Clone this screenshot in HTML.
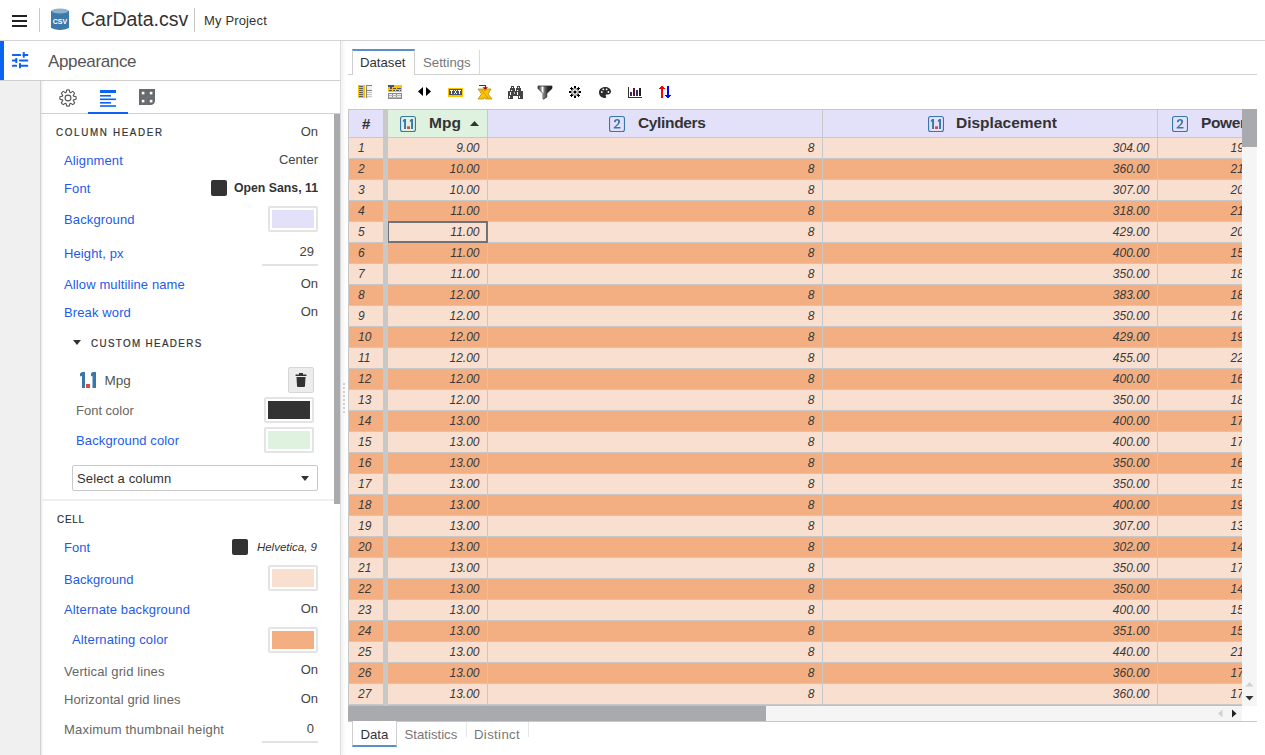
<!DOCTYPE html>
<html><head><meta charset="utf-8"><title>CarData.csv</title><style>
*{box-sizing:border-box}
html,body{margin:0;padding:0}
body{width:1265px;height:755px;overflow:hidden;position:relative;background:#fff;font-family:"Liberation Sans", sans-serif;color:#333}
.a{position:absolute}
.t{position:absolute;white-space:nowrap;line-height:1}
.lbl{color:#1f5be8;font-size:13px}
.gl{color:#666;font-size:13px}
.val{color:#444;font-size:13px}
.sw{position:absolute;border:2px solid #e4e4e4;background:#fff;border-radius:2px}
.sw i{position:absolute;left:2px;top:2px;right:2px;bottom:2px}
.row{position:absolute;left:349px;width:893px;height:20px}
.c{position:absolute;top:0;height:20px;font-size:12px;font-style:italic;line-height:20px;white-space:nowrap;color:#3a3a3a}
</style></head>
<body>
<div class="a" style="left:0;top:40px;width:1265px;height:1px;background:#d4d4d4"></div>
<div class="a" style="left:12px;top:15px;width:15px;height:2.4px;background:#222"></div>
<div class="a" style="left:12px;top:20px;width:15px;height:2.4px;background:#222"></div>
<div class="a" style="left:12px;top:25px;width:15px;height:2.4px;background:#222"></div>
<div class="a" style="left:39px;top:8px;width:1px;height:24px;background:#c8c8c8"></div>
<svg class="a" style="left:51px;top:8px" width="18" height="23" viewBox="0 0 18 23">
<path d="M0 3 Q9 -1 18 3 L18 20 Q9 24 0 20 Z" fill="#3d79a9"/>
<ellipse cx="9" cy="3" rx="8.5" ry="2.5" fill="#8db2d0"/>
<text x="9" y="16" font-family="Liberation Sans" font-weight="bold" font-size="7" fill="#fff" text-anchor="middle">CSV</text>
</svg>
<div class="t " style="left:81px;top:10.09px;font-size:19.5px;color:#333">CarData.csv</div>
<div class="a" style="left:194px;top:8px;width:1px;height:24px;background:#c8c8c8"></div>
<div class="t " style="left:204px;top:14.30px;font-size:13px;color:#333;letter-spacing:0.15px">My Project</div>
<div class="a" style="left:0;top:41px;width:4px;height:40px;background:#0b63f6"></div>
<div class="a" style="left:0;top:80px;width:340px;height:1px;background:#cfcfcf"></div>
<div class="a" style="left:0;top:81px;width:40px;height:674px;background:#f0f0f0"></div>
<div class="a" style="left:40px;top:81px;width:1px;height:674px;background:#d0d0d0"></div>
<div class="a" style="left:41px;top:81px;width:3px;height:674px;background:linear-gradient(to right,#ededed,#fff)"></div>
<svg class="a" style="left:12px;top:52px" width="17" height="17" viewBox="0 0 17 17" fill="#0b63f6">
<rect x="0" y="2" width="9" height="2" rx="0.6"/><rect x="10.6" y="2" width="5.6" height="2" rx="0.6"/><rect x="10.8" y="0.1" width="2" height="5.6" rx="0.6"/>
<rect x="0" y="7.4" width="5" height="2" rx="0.6"/><rect x="3.3" y="6" width="2" height="5" rx="0.6"/><rect x="7.1" y="7.4" width="9.1" height="2" rx="0.6"/>
<rect x="0" y="12.8" width="5" height="2" rx="0.6"/><rect x="7" y="11.1" width="2" height="5.2" rx="0.6"/><rect x="7" y="12.8" width="9.2" height="2" rx="0.6"/>
</svg>
<div class="t " style="left:48px;top:52.61px;font-size:17px;color:#555;letter-spacing:-0.35px">Appearance</div>
<div class="a" style="left:41px;top:113px;width:299px;height:1px;background:#d0d0d0"></div>
<div class="a" style="left:88px;top:112px;width:40px;height:2px;background:#0b63f6"></div>
<svg class="a" style="left:58px;top:88px" width="20" height="20" viewBox="0 0 24 24" fill="none" stroke="#555" stroke-width="1.35" stroke-linejoin="round">
<path d="M9.72 5.38L10.47 2.32A9.8 9.8 0 0 1 13.53 2.32L14.28 5.38A7.0 7.0 0 0 1 15.07 5.71L17.76 4.07A9.8 9.8 0 0 1 19.93 6.24L18.29 8.93A7.0 7.0 0 0 1 18.62 9.72L21.68 10.47A9.8 9.8 0 0 1 21.68 13.53L18.62 14.28A7.0 7.0 0 0 1 18.29 15.07L19.93 17.76A9.8 9.8 0 0 1 17.76 19.93L15.07 18.29A7.0 7.0 0 0 1 14.28 18.62L13.53 21.68A9.8 9.8 0 0 1 10.47 21.68L9.72 18.62A7.0 7.0 0 0 1 8.93 18.29L6.24 19.93A9.8 9.8 0 0 1 4.07 17.76L5.71 15.07A7.0 7.0 0 0 1 5.38 14.28L2.32 13.53A9.8 9.8 0 0 1 2.32 10.47L5.38 9.72A7.0 7.0 0 0 1 5.71 8.93L4.07 6.24A9.8 9.8 0 0 1 6.24 4.07L8.93 5.71A7.0 7.0 0 0 1 9.72 5.38Z"/>
<circle cx="12" cy="12" r="3.5"/></svg>
<svg class="a" style="left:100px;top:90px" width="16" height="17" viewBox="0 0 16 17" fill="#0b63f6">
<rect x="0" y="0" width="16" height="3"/><rect x="0" y="5" width="11" height="1.6"/><rect x="0" y="8.5" width="16" height="1.6"/><rect x="0" y="12" width="11" height="1.6"/><rect x="0" y="15.2" width="16" height="1.6"/>
</svg>
<svg class="a" style="left:136px;top:86px" width="22" height="22" viewBox="136 86 22 22">
<path d="M139 89 H155 V100.7 A4.3 4.3 0 0 1 150.7 105 H139 Z" fill="#676a6e"/>
<path d="M146.6 105 V97 H155" fill="none" stroke="#8a8d90" stroke-width="0.6" opacity="0.6"/>
<g fill="#fff"><rect x="141.8" y="91.8" width="2.6" height="2.6"/><rect x="149.8" y="91.8" width="2.6" height="2.6"/><rect x="141.8" y="99.8" width="2.6" height="2.6"/><rect x="149.8" y="99.8" width="2.6" height="2.6"/></g>
</svg>
<div class="a" style="left:334px;top:114px;width:6px;height:390px;background:#a9aaae"></div>
<div class="a" style="left:340px;top:41px;width:1px;height:714px;background:#dcdcdc"></div>
<div class="a" style="left:341px;top:41px;width:5px;height:714px;background:linear-gradient(to right,#f2f2f2,#fff)"></div>
<div class="a" style="left:343px;top:383px;width:2px;height:2px;background:#cfcfcf"></div>
<div class="a" style="left:343px;top:387px;width:2px;height:2px;background:#cfcfcf"></div>
<div class="a" style="left:343px;top:391px;width:2px;height:2px;background:#cfcfcf"></div>
<div class="a" style="left:343px;top:395px;width:2px;height:2px;background:#cfcfcf"></div>
<div class="a" style="left:343px;top:399px;width:2px;height:2px;background:#cfcfcf"></div>
<div class="a" style="left:343px;top:403px;width:2px;height:2px;background:#cfcfcf"></div>
<div class="a" style="left:343px;top:407px;width:2px;height:2px;background:#cfcfcf"></div>
<div class="a" style="left:343px;top:411px;width:2px;height:2px;background:#cfcfcf"></div>
<div class="t " style="left:56px;top:126.93px;font-size:11.3px;font-weight:400;letter-spacing:1.9px;color:#333;-webkit-text-stroke:0.22px #333;transform:scaleX(0.87);transform-origin:0 0">COLUMN HEADER</div>
<div class="t val" style="left:318px;top:125.20px;font-size:13px;transform:translateX(-100%)">On</div>
<div class="t lbl" style="left:64px;top:154.00px;font-size:13px;letter-spacing:0.12px">Alignment</div>
<div class="t lbl" style="left:64px;top:182.00px;font-size:13px;letter-spacing:0.12px">Font</div>
<div class="t lbl" style="left:64px;top:213.00px;font-size:13px;letter-spacing:0.12px">Background</div>
<div class="t lbl" style="left:64px;top:247.00px;font-size:13px;letter-spacing:0.12px">Height, px</div>
<div class="t lbl" style="left:64px;top:278.00px;font-size:13px;letter-spacing:0.12px">Allow multiline name</div>
<div class="t lbl" style="left:64px;top:306.00px;font-size:13px;letter-spacing:0.12px">Break word</div>
<div class="t val" style="left:318px;top:153.30px;font-size:13px;transform:translateX(-100%)">Center</div>
<div class="a" style="left:211px;top:180px;width:16px;height:16px;background:#333;border-radius:2px"></div>
<div class="t " style="left:318px;top:181.59px;font-size:12.3px;font-weight:700;color:#333;transform:translateX(-100%)">Open Sans, 11</div>
<div class="sw" style="left:268px;top:206px;width:50px;height:26px"><i style="background:#e3e0fa"></i></div>
<div class="t val" style="left:314px;top:245.30px;font-size:13px;transform:translateX(-100%)">29</div>
<div class="a" style="left:262px;top:264px;width:56px;height:2px;background:#e2e2e2"></div>
<div class="t val" style="left:318px;top:276.90px;font-size:13px;transform:translateX(-100%)">On</div>
<div class="t val" style="left:318px;top:304.80px;font-size:13px;transform:translateX(-100%)">On</div>
<svg class="a" style="left:73px;top:340px" width="8" height="5" viewBox="0 0 8 5"><path d="M0 0H8L4 5Z" fill="#333"/></svg>
<div class="t " style="left:91px;top:337.63px;font-size:11.3px;font-weight:400;letter-spacing:1.55px;color:#333;-webkit-text-stroke:0.22px #333;transform:scaleX(0.87);transform-origin:0 0">CUSTOM HEADERS</div>
<svg class="a" style="left:80px;top:372px" width="17" height="16" viewBox="0 0 17 16">
<path d="M2 0 H5 V16 H2 V3.8 L0 4.6 V1.5 Z" fill="#3a76a8"/>
<rect x="6" y="12" width="4" height="4" fill="#dd4a3c"/>
<path d="M12.5 0 H16 V16 H12.5 V3.8 L11 4.5 V1.5 Z" fill="#3a76a8"/>
</svg>
<div class="t " style="left:104.5px;top:373.57px;font-size:13.5px;color:#555">Mpg</div>
<div class="a" style="left:288px;top:367px;width:26px;height:26px;background:#ececec;border:1px solid #d6d6d6;border-radius:2px"></div>
<svg class="a" style="left:295px;top:373px" width="12" height="14" viewBox="0 0 12 14" fill="#333">
<rect x="0.5" y="1.5" width="11" height="1.6" rx="0.5"/><rect x="4" y="0" width="4" height="2"/>
<path d="M1.5 4 H10.5 L10 13 Q10 14 9 14 H3 Q2 14 2 13 Z"/></svg>
<div class="t gl" style="left:76px;top:403.70px;font-size:13px;">Font color</div>
<div class="sw" style="left:264px;top:397px;width:50px;height:26px"><i style="background:#333"></i></div>
<div class="t lbl" style="left:76px;top:434.00px;font-size:13px;letter-spacing:0.12px">Background color</div>
<div class="sw" style="left:264px;top:427px;width:50px;height:26px"><i style="background:#dff1df"></i></div>
<div class="a" style="left:72px;top:465px;width:246px;height:26px;border:1px solid #c9c9c9;border-radius:2px;background:#fff"></div>
<div class="t " style="left:77px;top:472.00px;font-size:13px;color:#333;letter-spacing:0.12px">Select a column</div>
<svg class="a" style="left:301px;top:476px" width="8" height="5" viewBox="0 0 8 5"><path d="M0 0H8L4 5Z" fill="#333"/></svg>
<div class="a" style="left:41px;top:499px;width:293px;height:2px;background:#efefef"></div>
<div class="t " style="left:56.5px;top:514.03px;font-size:11.3px;font-weight:400;letter-spacing:0.9px;color:#333;-webkit-text-stroke:0.22px #333;transform:scaleX(0.87);transform-origin:0 0">CELL</div>
<div class="t lbl" style="left:64px;top:541.30px;font-size:13px;">Font</div>
<div class="a" style="left:232px;top:539px;width:16px;height:16px;background:#333;border-radius:2px"></div>
<div class="t " style="left:317px;top:541.67px;font-size:11.5px;font-style:italic;color:#333;transform:translateX(-100%)">Helvetica, 9</div>
<div class="t lbl" style="left:64px;top:572.60px;font-size:13px;">Background</div>
<div class="sw" style="left:268px;top:565px;width:50px;height:26px"><i style="background:#f9dfcf"></i></div>
<div class="t lbl" style="left:64px;top:603.00px;font-size:13px;letter-spacing:0.12px">Alternate background</div>
<div class="t val" style="left:318px;top:601.80px;font-size:13px;transform:translateX(-100%)">On</div>
<div class="t lbl" style="left:72px;top:633.00px;font-size:13px;letter-spacing:0.12px">Alternating color</div>
<div class="sw" style="left:268px;top:627px;width:50px;height:26px"><i style="background:#f3af82"></i></div>
<div class="t gl" style="left:64px;top:664.50px;font-size:13px;letter-spacing:0.12px">Vertical grid lines</div>
<div class="t val" style="left:318px;top:663.40px;font-size:13px;transform:translateX(-100%)">On</div>
<div class="t gl" style="left:64px;top:693.20px;font-size:13px;letter-spacing:0.12px">Horizontal grid lines</div>
<div class="t val" style="left:318px;top:691.70px;font-size:13px;transform:translateX(-100%)">On</div>
<div class="t gl" style="left:64px;top:723.30px;font-size:13px;letter-spacing:0.2px">Maximum thumbnail height</div>
<div class="t val" style="left:314px;top:721.50px;font-size:13px;transform:translateX(-100%)">0</div>
<div class="a" style="left:262px;top:741px;width:56px;height:2px;background:#e2e2e2"></div>
<div class="a" style="left:348px;top:74px;width:909px;height:1px;background:#d0d0d0"></div>
<div class="a" style="left:352px;top:49px;width:63px;height:26px;background:#fff;border-left:1px solid #cfcfcf;border-right:1px solid #cfcfcf;border-top:2px solid #5b8fc7"></div>
<div class="a" style="left:415px;top:74px;width:64px;height:1px;background:#d0d0d0"></div>
<div class="a" style="left:479px;top:50px;width:1px;height:24px;background:#dadada"></div>
<div class="t " style="left:360px;top:55.83px;font-size:13.2px;color:#333">Dataset</div>
<div class="t " style="left:423px;top:55.83px;font-size:13.2px;color:#777">Settings</div>
<svg class="a" style="left:350px;top:80px" width="330" height="24" viewBox="350 80 330 24">
<g shape-rendering="crispEdges">
<!-- icon1 -->
<rect x="358" y="85" width="7" height="13" fill="#ffc400"/>
<g fill="#5b6070"><rect x="359" y="86" width="4" height="1"/><rect x="359" y="88" width="4" height="1"/><rect x="359" y="90" width="4" height="1"/><rect x="359" y="92" width="4" height="1"/><rect x="359" y="94" width="4" height="1"/><rect x="359" y="96" width="4" height="1"/></g>
<rect x="366" y="85" width="6" height="13" fill="#efefef"/>
<rect x="366" y="85" width="1" height="13" fill="#858585"/>
<rect x="366" y="85" width="6" height="1" fill="#858585"/>
<rect x="366" y="90" width="6" height="1" fill="#858585"/>
<rect x="367" y="92" width="5" height="1" fill="#c9c9c9"/><rect x="367" y="94" width="5" height="1" fill="#c9c9c9"/><rect x="367" y="96" width="5" height="1" fill="#c9c9c9"/>
<!-- icon2 -->
<rect x="388" y="85" width="14" height="7" fill="#ffc400"/>
<g fill="#4d5366"><rect x="388" y="85" width="6" height="2"/><rect x="390" y="87" width="2" height="2"/>
<rect x="393" y="88" width="3" height="1"/><rect x="397" y="88" width="4" height="1"/>
<rect x="389" y="90" width="3" height="1"/><rect x="393" y="90" width="2" height="1"/><rect x="396" y="90" width="3" height="1"/><rect x="400" y="90" width="1" height="1"/></g>
<rect x="388" y="93" width="14" height="6" fill="#8a8a8a"/>
<g fill="#ececec"><rect x="389" y="94" width="3" height="1"/><rect x="393" y="94" width="3" height="1"/><rect x="397" y="94" width="4" height="1"/>
<rect x="389" y="96" width="3" height="1"/><rect x="393" y="96" width="3" height="1"/><rect x="397" y="96" width="4" height="1"/></g>
<rect x="389" y="95" width="12" height="1" fill="#b5b5b5"/><rect x="389" y="97" width="12" height="1" fill="#b5b5b5"/>
<!-- icon4 TXT -->
<rect x="448" y="88" width="15" height="9" fill="#ffc400"/>
<rect x="449" y="89" width="13" height="6" fill="#4a5468"/>
<g fill="#fff"><rect x="450" y="90" width="3" height="1"/><rect x="451" y="91" width="1" height="3"/>
<rect x="454" y="90" width="1" height="1"/><rect x="456" y="90" width="1" height="1"/><rect x="455" y="91" width="1" height="2"/><rect x="454" y="93" width="1" height="1"/><rect x="456" y="93" width="1" height="1"/>
<rect x="458" y="90" width="3" height="1"/><rect x="459" y="91" width="1" height="3"/></g>
<!-- icon11 arrows -->
<g fill="#ff0000"><rect x="661" y="88" width="2" height="10"/><rect x="660" y="87" width="4" height="1"/><rect x="659" y="88" width="6" height="1"/><rect x="661" y="86" width="2" height="1"/></g>
<g fill="#0000ff"><rect x="667" y="86" width="2" height="10"/><rect x="665" y="95" width="6" height="1"/><rect x="666" y="96" width="4" height="1"/><rect x="667" y="97" width="2" height="1"/></g>
<!-- icon10 chart -->
<rect x="628" y="87" width="1" height="11" fill="#333"/>
<rect x="628" y="97" width="14" height="1" fill="#333"/>
<rect x="630" y="92" width="2" height="4" fill="#3a2a5a"/>
<rect x="633" y="88" width="2" height="8" fill="#5e1535"/>
<rect x="636" y="90" width="2" height="6" fill="#2a3266"/>
<rect x="639" y="88" width="2" height="8" fill="#222"/>
</g>
<!-- icon3 triangles -->
<path d="M418 91.5 L423 87 V96 Z M426 87 L431 91.5 L426 96 Z" fill="#000"/>
<!-- icon5 X -->
<path d="M479 85.5 H485.5 V88" stroke="#cc0000" stroke-width="1.2" fill="none"/>
<path d="M482.5 87.3 H488 L485.3 90.2 Z" fill="#cc0000"/>
<path d="M478 89 H484 L485 91 L486 89 H491 L488 94 L492 99 H485.5 L484.5 97 L483.5 99 H478 L481.5 94 Z" fill="#ffc400" stroke="#a88400" stroke-width="0.7"/>
<path d="M481 89.5 L488.5 98.5" stroke="#b89000" stroke-width="0.8"/>
<!-- icon6 binoculars -->
<g fill="#444" shape-rendering="crispEdges"><rect x="511" y="86" width="3" height="3"/><rect x="510" y="88" width="5" height="3"/><rect x="508" y="91" width="5" height="8"/><rect x="513" y="91" width="3" height="5"/>
<rect x="517" y="86" width="3" height="3"/><rect x="516" y="88" width="5" height="3"/><rect x="516" y="91" width="7" height="5"/><rect x="518" y="96" width="5" height="3"/></g>
<g fill="#fff"><rect x="512" y="87" width="1" height="1"/><rect x="518" y="87" width="1" height="1"/><rect x="511" y="90" width="1.2" height="1"/><rect x="517" y="90" width="1.2" height="1"/>
<rect x="510" y="92" width="1" height="3"/><rect x="517" y="92" width="1" height="3"/><rect x="509" y="96" width="1" height="2"/><rect x="519" y="96" width="1" height="2"/></g>
<rect x="514" y="92" width="1" height="2" fill="#bbb"/>
<!-- icon7 funnel -->
<defs><linearGradient id="fg" x1="0" x2="1"><stop offset="0" stop-color="#333"/><stop offset="0.22" stop-color="#999"/><stop offset="0.32" stop-color="#fff"/><stop offset="0.45" stop-color="#777"/><stop offset="0.65" stop-color="#333"/><stop offset="1" stop-color="#111"/></linearGradient></defs>
<path d="M538 86 H552 V88.5 L546.8 93.5 V97 L544 99 H543 V93.5 L538 88.5 Z" fill="url(#fg)" stroke="#333" stroke-width="0.8"/>
<!-- icon8 sun -->
<circle cx="575" cy="92" r="3.4" fill="#fff" stroke="#111" stroke-width="0.7"/>
<circle cx="575" cy="92" r="1.6" fill="#000"/>
<g fill="#000" shape-rendering="crispEdges"><rect x="574" y="86" width="2" height="2"/><rect x="574" y="96" width="2" height="2"/><rect x="569" y="91" width="2" height="2"/><rect x="579" y="91" width="2" height="2"/>
<rect x="571" y="87" width="1" height="3"/><rect x="570" y="88" width="3" height="1"/>
<rect x="578" y="87" width="1" height="3"/><rect x="577" y="88" width="3" height="1"/>
<rect x="571" y="94" width="1" height="3"/><rect x="570" y="95" width="3" height="1"/>
<rect x="578" y="94" width="1" height="3"/><rect x="577" y="95" width="3" height="1"/></g>
<!-- icon9 palette -->
<path d="M605 87 C608.5 87 611 89 611 91.5 C611 93.8 609 94.6 606.5 94.6 C605.5 94.6 605.5 95.5 606 96.3 C606.6 97.3 606 98 605 98 C601.5 98 599 95.5 599 92.5 C599 89.3 601.5 87 605 87 Z" fill="#2e2e2e"/>
<g fill="#fff"><circle cx="603.3" cy="89.3" r="0.9"/><circle cx="606.6" cy="89.3" r="0.9"/><circle cx="601.8" cy="92" r="0.9"/><circle cx="608.4" cy="92" r="0.9"/></g>
</svg>

<div class="a" style="left:348px;top:109px;width:894px;height:597px;background:#c8c8c8;overflow:hidden">
<div class="a" style="left:1px;top:1px;width:34px;height:27px;background:#e3e0fa"></div>
<div class="a" style="left:40px;top:1px;width:99px;height:27px;background:#dff1df"></div>
<div class="a" style="left:140px;top:1px;width:334px;height:27px;background:#e3e0fa"></div>
<div class="a" style="left:475px;top:1px;width:334px;height:27px;background:#e3e0fa"></div>
<div class="a" style="left:810px;top:1px;width:200px;height:27px;background:#e3e0fa"></div>
<div class="a" style="left:35px;top:1px;width:5px;height:600px;background:#c8c8c8"></div>
<div class="t" style="left:14px;top:7.3px;font-size:15px;font-weight:700;color:#333">#</div>
<svg class="a" style="left:52px;top:7px" width="16" height="16" viewBox="0 0 16 16"><rect x="0.55" y="0.55" width="14.9" height="14.9" rx="2" fill="none" stroke="#3a76a8" stroke-width="1.1"/><path d="M4.1 3 H6 V13 H4.1 V5.4 L2.9 6 V4.4 Z" fill="#3a76a8"/><rect x="7.1" y="10.3" width="2.9" height="2.7" fill="#e0453a"/><path d="M11.1 3 H13 V13 H11.1 V5.4 L9.9 6 V4.4 Z" fill="#3a76a8"/></svg>
<div class="t" style="left:81px;top:6.38px;font-size:15.5px;font-weight:700;color:#333">Mpg</div>
<svg class="a" style="left:122px;top:12px" width="9" height="5" viewBox="0 0 9 5"><path d="M0 5H9L4.5 0Z" fill="#333"/></svg>
<svg class="a" style="left:261px;top:7px" width="16" height="16" viewBox="0 0 16 16"><rect x="0.55" y="0.55" width="14.9" height="14.9" rx="2" fill="none" stroke="#3a76a8" stroke-width="1.1"/><g transform="translate(0,-0.6)"><path d="M5.3 5.9 Q5.7 3.6 8.2 3.6 Q11.1 3.6 11.1 6.2 Q11.1 8.1 8.7 10 L6.7 11.6 H11.5 V13.1 H4.6 V12 L7.8 9.1 Q9.2 7.8 9.2 6.3 Q9.2 5 8 5 Q7.1 5 6.8 5.9 Z" fill="#3a76a8"/><circle cx="6" cy="5.9" r="1.05" fill="#3a76a8"/></g></svg>
<div class="t" style="left:290px;top:6.38px;font-size:15.5px;font-weight:700;color:#333"><span style="letter-spacing:-0.35px">Cylinders</span></div>
<svg class="a" style="left:580px;top:7px" width="16" height="16" viewBox="0 0 16 16"><rect x="0.55" y="0.55" width="14.9" height="14.9" rx="2" fill="none" stroke="#3a76a8" stroke-width="1.1"/><path d="M4.1 3 H6 V13 H4.1 V5.4 L2.9 6 V4.4 Z" fill="#3a76a8"/><rect x="7.1" y="10.3" width="2.9" height="2.7" fill="#e0453a"/><path d="M11.1 3 H13 V13 H11.1 V5.4 L9.9 6 V4.4 Z" fill="#3a76a8"/></svg>
<div class="t" style="left:608px;top:6.38px;font-size:15.5px;font-weight:700;color:#333">Displacement</div>
<svg class="a" style="left:824px;top:7px" width="16" height="16" viewBox="0 0 16 16"><rect x="0.55" y="0.55" width="14.9" height="14.9" rx="2" fill="none" stroke="#3a76a8" stroke-width="1.1"/><g transform="translate(0,-0.6)"><path d="M5.3 5.9 Q5.7 3.6 8.2 3.6 Q11.1 3.6 11.1 6.2 Q11.1 8.1 8.7 10 L6.7 11.6 H11.5 V13.1 H4.6 V12 L7.8 9.1 Q9.2 7.8 9.2 6.3 Q9.2 5 8 5 Q7.1 5 6.8 5.9 Z" fill="#3a76a8"/><circle cx="6" cy="5.9" r="1.05" fill="#3a76a8"/></g></svg>
<div class="t" style="left:853px;top:6.38px;font-size:15.5px;font-weight:700;color:#333"><span style="letter-spacing:-0.4px">Power</span></div>
<div class="a" style="left:1px;top:29px;width:34px;height:20px;background:#f9dfcf"></div>
<div class="c" style="left:10px;top:29px">1</div>
<div class="a" style="left:40px;top:29px;width:99px;height:20px;background:#f9dfcf"></div>
<div class="c" style="right:762.5px;top:29px">9.00</div>
<div class="a" style="left:140px;top:29px;width:334px;height:20px;background:#f9dfcf"></div>
<div class="c" style="right:427.5px;top:29px">8</div>
<div class="a" style="left:475px;top:29px;width:334px;height:20px;background:#f9dfcf"></div>
<div class="c" style="right:92.5px;top:29px">304.00</div>
<div class="a" style="left:810px;top:29px;width:200px;height:20px;background:#f9dfcf"></div>
<div class="c" style="left:882.5px;top:29px">193.00</div>
<div class="a" style="left:1px;top:50px;width:34px;height:20px;background:#f3af82"></div>
<div class="c" style="left:10px;top:50px">2</div>
<div class="a" style="left:40px;top:50px;width:99px;height:20px;background:#f3af82"></div>
<div class="c" style="right:762.5px;top:50px">10.00</div>
<div class="a" style="left:140px;top:50px;width:334px;height:20px;background:#f3af82"></div>
<div class="c" style="right:427.5px;top:50px">8</div>
<div class="a" style="left:475px;top:50px;width:334px;height:20px;background:#f3af82"></div>
<div class="c" style="right:92.5px;top:50px">360.00</div>
<div class="a" style="left:810px;top:50px;width:200px;height:20px;background:#f3af82"></div>
<div class="c" style="left:882.5px;top:50px">215.00</div>
<div class="a" style="left:1px;top:71px;width:34px;height:20px;background:#f9dfcf"></div>
<div class="c" style="left:10px;top:71px">3</div>
<div class="a" style="left:40px;top:71px;width:99px;height:20px;background:#f9dfcf"></div>
<div class="c" style="right:762.5px;top:71px">10.00</div>
<div class="a" style="left:140px;top:71px;width:334px;height:20px;background:#f9dfcf"></div>
<div class="c" style="right:427.5px;top:71px">8</div>
<div class="a" style="left:475px;top:71px;width:334px;height:20px;background:#f9dfcf"></div>
<div class="c" style="right:92.5px;top:71px">307.00</div>
<div class="a" style="left:810px;top:71px;width:200px;height:20px;background:#f9dfcf"></div>
<div class="c" style="left:882.5px;top:71px">200.00</div>
<div class="a" style="left:1px;top:92px;width:34px;height:20px;background:#f3af82"></div>
<div class="c" style="left:10px;top:92px">4</div>
<div class="a" style="left:40px;top:92px;width:99px;height:20px;background:#f3af82"></div>
<div class="c" style="right:762.5px;top:92px">11.00</div>
<div class="a" style="left:140px;top:92px;width:334px;height:20px;background:#f3af82"></div>
<div class="c" style="right:427.5px;top:92px">8</div>
<div class="a" style="left:475px;top:92px;width:334px;height:20px;background:#f3af82"></div>
<div class="c" style="right:92.5px;top:92px">318.00</div>
<div class="a" style="left:810px;top:92px;width:200px;height:20px;background:#f3af82"></div>
<div class="c" style="left:882.5px;top:92px">210.00</div>
<div class="a" style="left:1px;top:113px;width:34px;height:20px;background:#f9dfcf"></div>
<div class="c" style="left:10px;top:113px">5</div>
<div class="a" style="left:40px;top:113px;width:99px;height:20px;background:#f9dfcf"></div>
<div class="c" style="right:762.5px;top:113px">11.00</div>
<div class="a" style="left:140px;top:113px;width:334px;height:20px;background:#f9dfcf"></div>
<div class="c" style="right:427.5px;top:113px">8</div>
<div class="a" style="left:475px;top:113px;width:334px;height:20px;background:#f9dfcf"></div>
<div class="c" style="right:92.5px;top:113px">429.00</div>
<div class="a" style="left:810px;top:113px;width:200px;height:20px;background:#f9dfcf"></div>
<div class="c" style="left:882.5px;top:113px">208.00</div>
<div class="a" style="left:1px;top:134px;width:34px;height:20px;background:#f3af82"></div>
<div class="c" style="left:10px;top:134px">6</div>
<div class="a" style="left:40px;top:134px;width:99px;height:20px;background:#f3af82"></div>
<div class="c" style="right:762.5px;top:134px">11.00</div>
<div class="a" style="left:140px;top:134px;width:334px;height:20px;background:#f3af82"></div>
<div class="c" style="right:427.5px;top:134px">8</div>
<div class="a" style="left:475px;top:134px;width:334px;height:20px;background:#f3af82"></div>
<div class="c" style="right:92.5px;top:134px">400.00</div>
<div class="a" style="left:810px;top:134px;width:200px;height:20px;background:#f3af82"></div>
<div class="c" style="left:882.5px;top:134px">150.00</div>
<div class="a" style="left:1px;top:155px;width:34px;height:20px;background:#f9dfcf"></div>
<div class="c" style="left:10px;top:155px">7</div>
<div class="a" style="left:40px;top:155px;width:99px;height:20px;background:#f9dfcf"></div>
<div class="c" style="right:762.5px;top:155px">11.00</div>
<div class="a" style="left:140px;top:155px;width:334px;height:20px;background:#f9dfcf"></div>
<div class="c" style="right:427.5px;top:155px">8</div>
<div class="a" style="left:475px;top:155px;width:334px;height:20px;background:#f9dfcf"></div>
<div class="c" style="right:92.5px;top:155px">350.00</div>
<div class="a" style="left:810px;top:155px;width:200px;height:20px;background:#f9dfcf"></div>
<div class="c" style="left:882.5px;top:155px">180.00</div>
<div class="a" style="left:1px;top:176px;width:34px;height:20px;background:#f3af82"></div>
<div class="c" style="left:10px;top:176px">8</div>
<div class="a" style="left:40px;top:176px;width:99px;height:20px;background:#f3af82"></div>
<div class="c" style="right:762.5px;top:176px">12.00</div>
<div class="a" style="left:140px;top:176px;width:334px;height:20px;background:#f3af82"></div>
<div class="c" style="right:427.5px;top:176px">8</div>
<div class="a" style="left:475px;top:176px;width:334px;height:20px;background:#f3af82"></div>
<div class="c" style="right:92.5px;top:176px">383.00</div>
<div class="a" style="left:810px;top:176px;width:200px;height:20px;background:#f3af82"></div>
<div class="c" style="left:882.5px;top:176px">180.00</div>
<div class="a" style="left:1px;top:197px;width:34px;height:20px;background:#f9dfcf"></div>
<div class="c" style="left:10px;top:197px">9</div>
<div class="a" style="left:40px;top:197px;width:99px;height:20px;background:#f9dfcf"></div>
<div class="c" style="right:762.5px;top:197px">12.00</div>
<div class="a" style="left:140px;top:197px;width:334px;height:20px;background:#f9dfcf"></div>
<div class="c" style="right:427.5px;top:197px">8</div>
<div class="a" style="left:475px;top:197px;width:334px;height:20px;background:#f9dfcf"></div>
<div class="c" style="right:92.5px;top:197px">350.00</div>
<div class="a" style="left:810px;top:197px;width:200px;height:20px;background:#f9dfcf"></div>
<div class="c" style="left:882.5px;top:197px">160.00</div>
<div class="a" style="left:1px;top:218px;width:34px;height:20px;background:#f3af82"></div>
<div class="c" style="left:10px;top:218px">10</div>
<div class="a" style="left:40px;top:218px;width:99px;height:20px;background:#f3af82"></div>
<div class="c" style="right:762.5px;top:218px">12.00</div>
<div class="a" style="left:140px;top:218px;width:334px;height:20px;background:#f3af82"></div>
<div class="c" style="right:427.5px;top:218px">8</div>
<div class="a" style="left:475px;top:218px;width:334px;height:20px;background:#f3af82"></div>
<div class="c" style="right:92.5px;top:218px">429.00</div>
<div class="a" style="left:810px;top:218px;width:200px;height:20px;background:#f3af82"></div>
<div class="c" style="left:882.5px;top:218px">198.00</div>
<div class="a" style="left:1px;top:239px;width:34px;height:20px;background:#f9dfcf"></div>
<div class="c" style="left:10px;top:239px">11</div>
<div class="a" style="left:40px;top:239px;width:99px;height:20px;background:#f9dfcf"></div>
<div class="c" style="right:762.5px;top:239px">12.00</div>
<div class="a" style="left:140px;top:239px;width:334px;height:20px;background:#f9dfcf"></div>
<div class="c" style="right:427.5px;top:239px">8</div>
<div class="a" style="left:475px;top:239px;width:334px;height:20px;background:#f9dfcf"></div>
<div class="c" style="right:92.5px;top:239px">455.00</div>
<div class="a" style="left:810px;top:239px;width:200px;height:20px;background:#f9dfcf"></div>
<div class="c" style="left:882.5px;top:239px">225.00</div>
<div class="a" style="left:1px;top:260px;width:34px;height:20px;background:#f3af82"></div>
<div class="c" style="left:10px;top:260px">12</div>
<div class="a" style="left:40px;top:260px;width:99px;height:20px;background:#f3af82"></div>
<div class="c" style="right:762.5px;top:260px">12.00</div>
<div class="a" style="left:140px;top:260px;width:334px;height:20px;background:#f3af82"></div>
<div class="c" style="right:427.5px;top:260px">8</div>
<div class="a" style="left:475px;top:260px;width:334px;height:20px;background:#f3af82"></div>
<div class="c" style="right:92.5px;top:260px">400.00</div>
<div class="a" style="left:810px;top:260px;width:200px;height:20px;background:#f3af82"></div>
<div class="c" style="left:882.5px;top:260px">167.00</div>
<div class="a" style="left:1px;top:281px;width:34px;height:20px;background:#f9dfcf"></div>
<div class="c" style="left:10px;top:281px">13</div>
<div class="a" style="left:40px;top:281px;width:99px;height:20px;background:#f9dfcf"></div>
<div class="c" style="right:762.5px;top:281px">12.00</div>
<div class="a" style="left:140px;top:281px;width:334px;height:20px;background:#f9dfcf"></div>
<div class="c" style="right:427.5px;top:281px">8</div>
<div class="a" style="left:475px;top:281px;width:334px;height:20px;background:#f9dfcf"></div>
<div class="c" style="right:92.5px;top:281px">350.00</div>
<div class="a" style="left:810px;top:281px;width:200px;height:20px;background:#f9dfcf"></div>
<div class="c" style="left:882.5px;top:281px">180.00</div>
<div class="a" style="left:1px;top:302px;width:34px;height:20px;background:#f3af82"></div>
<div class="c" style="left:10px;top:302px">14</div>
<div class="a" style="left:40px;top:302px;width:99px;height:20px;background:#f3af82"></div>
<div class="c" style="right:762.5px;top:302px">13.00</div>
<div class="a" style="left:140px;top:302px;width:334px;height:20px;background:#f3af82"></div>
<div class="c" style="right:427.5px;top:302px">8</div>
<div class="a" style="left:475px;top:302px;width:334px;height:20px;background:#f3af82"></div>
<div class="c" style="right:92.5px;top:302px">400.00</div>
<div class="a" style="left:810px;top:302px;width:200px;height:20px;background:#f3af82"></div>
<div class="c" style="left:882.5px;top:302px">170.00</div>
<div class="a" style="left:1px;top:323px;width:34px;height:20px;background:#f9dfcf"></div>
<div class="c" style="left:10px;top:323px">15</div>
<div class="a" style="left:40px;top:323px;width:99px;height:20px;background:#f9dfcf"></div>
<div class="c" style="right:762.5px;top:323px">13.00</div>
<div class="a" style="left:140px;top:323px;width:334px;height:20px;background:#f9dfcf"></div>
<div class="c" style="right:427.5px;top:323px">8</div>
<div class="a" style="left:475px;top:323px;width:334px;height:20px;background:#f9dfcf"></div>
<div class="c" style="right:92.5px;top:323px">400.00</div>
<div class="a" style="left:810px;top:323px;width:200px;height:20px;background:#f9dfcf"></div>
<div class="c" style="left:882.5px;top:323px">175.00</div>
<div class="a" style="left:1px;top:344px;width:34px;height:20px;background:#f3af82"></div>
<div class="c" style="left:10px;top:344px">16</div>
<div class="a" style="left:40px;top:344px;width:99px;height:20px;background:#f3af82"></div>
<div class="c" style="right:762.5px;top:344px">13.00</div>
<div class="a" style="left:140px;top:344px;width:334px;height:20px;background:#f3af82"></div>
<div class="c" style="right:427.5px;top:344px">8</div>
<div class="a" style="left:475px;top:344px;width:334px;height:20px;background:#f3af82"></div>
<div class="c" style="right:92.5px;top:344px">350.00</div>
<div class="a" style="left:810px;top:344px;width:200px;height:20px;background:#f3af82"></div>
<div class="c" style="left:882.5px;top:344px">165.00</div>
<div class="a" style="left:1px;top:365px;width:34px;height:20px;background:#f9dfcf"></div>
<div class="c" style="left:10px;top:365px">17</div>
<div class="a" style="left:40px;top:365px;width:99px;height:20px;background:#f9dfcf"></div>
<div class="c" style="right:762.5px;top:365px">13.00</div>
<div class="a" style="left:140px;top:365px;width:334px;height:20px;background:#f9dfcf"></div>
<div class="c" style="right:427.5px;top:365px">8</div>
<div class="a" style="left:475px;top:365px;width:334px;height:20px;background:#f9dfcf"></div>
<div class="c" style="right:92.5px;top:365px">350.00</div>
<div class="a" style="left:810px;top:365px;width:200px;height:20px;background:#f9dfcf"></div>
<div class="c" style="left:882.5px;top:365px">150.00</div>
<div class="a" style="left:1px;top:386px;width:34px;height:20px;background:#f3af82"></div>
<div class="c" style="left:10px;top:386px">18</div>
<div class="a" style="left:40px;top:386px;width:99px;height:20px;background:#f3af82"></div>
<div class="c" style="right:762.5px;top:386px">13.00</div>
<div class="a" style="left:140px;top:386px;width:334px;height:20px;background:#f3af82"></div>
<div class="c" style="right:427.5px;top:386px">8</div>
<div class="a" style="left:475px;top:386px;width:334px;height:20px;background:#f3af82"></div>
<div class="c" style="right:92.5px;top:386px">400.00</div>
<div class="a" style="left:810px;top:386px;width:200px;height:20px;background:#f3af82"></div>
<div class="c" style="left:882.5px;top:386px">190.00</div>
<div class="a" style="left:1px;top:407px;width:34px;height:20px;background:#f9dfcf"></div>
<div class="c" style="left:10px;top:407px">19</div>
<div class="a" style="left:40px;top:407px;width:99px;height:20px;background:#f9dfcf"></div>
<div class="c" style="right:762.5px;top:407px">13.00</div>
<div class="a" style="left:140px;top:407px;width:334px;height:20px;background:#f9dfcf"></div>
<div class="c" style="right:427.5px;top:407px">8</div>
<div class="a" style="left:475px;top:407px;width:334px;height:20px;background:#f9dfcf"></div>
<div class="c" style="right:92.5px;top:407px">307.00</div>
<div class="a" style="left:810px;top:407px;width:200px;height:20px;background:#f9dfcf"></div>
<div class="c" style="left:882.5px;top:407px">130.00</div>
<div class="a" style="left:1px;top:428px;width:34px;height:20px;background:#f3af82"></div>
<div class="c" style="left:10px;top:428px">20</div>
<div class="a" style="left:40px;top:428px;width:99px;height:20px;background:#f3af82"></div>
<div class="c" style="right:762.5px;top:428px">13.00</div>
<div class="a" style="left:140px;top:428px;width:334px;height:20px;background:#f3af82"></div>
<div class="c" style="right:427.5px;top:428px">8</div>
<div class="a" style="left:475px;top:428px;width:334px;height:20px;background:#f3af82"></div>
<div class="c" style="right:92.5px;top:428px">302.00</div>
<div class="a" style="left:810px;top:428px;width:200px;height:20px;background:#f3af82"></div>
<div class="c" style="left:882.5px;top:428px">140.00</div>
<div class="a" style="left:1px;top:449px;width:34px;height:20px;background:#f9dfcf"></div>
<div class="c" style="left:10px;top:449px">21</div>
<div class="a" style="left:40px;top:449px;width:99px;height:20px;background:#f9dfcf"></div>
<div class="c" style="right:762.5px;top:449px">13.00</div>
<div class="a" style="left:140px;top:449px;width:334px;height:20px;background:#f9dfcf"></div>
<div class="c" style="right:427.5px;top:449px">8</div>
<div class="a" style="left:475px;top:449px;width:334px;height:20px;background:#f9dfcf"></div>
<div class="c" style="right:92.5px;top:449px">350.00</div>
<div class="a" style="left:810px;top:449px;width:200px;height:20px;background:#f9dfcf"></div>
<div class="c" style="left:882.5px;top:449px">175.00</div>
<div class="a" style="left:1px;top:470px;width:34px;height:20px;background:#f3af82"></div>
<div class="c" style="left:10px;top:470px">22</div>
<div class="a" style="left:40px;top:470px;width:99px;height:20px;background:#f3af82"></div>
<div class="c" style="right:762.5px;top:470px">13.00</div>
<div class="a" style="left:140px;top:470px;width:334px;height:20px;background:#f3af82"></div>
<div class="c" style="right:427.5px;top:470px">8</div>
<div class="a" style="left:475px;top:470px;width:334px;height:20px;background:#f3af82"></div>
<div class="c" style="right:92.5px;top:470px">350.00</div>
<div class="a" style="left:810px;top:470px;width:200px;height:20px;background:#f3af82"></div>
<div class="c" style="left:882.5px;top:470px">145.00</div>
<div class="a" style="left:1px;top:491px;width:34px;height:20px;background:#f9dfcf"></div>
<div class="c" style="left:10px;top:491px">23</div>
<div class="a" style="left:40px;top:491px;width:99px;height:20px;background:#f9dfcf"></div>
<div class="c" style="right:762.5px;top:491px">13.00</div>
<div class="a" style="left:140px;top:491px;width:334px;height:20px;background:#f9dfcf"></div>
<div class="c" style="right:427.5px;top:491px">8</div>
<div class="a" style="left:475px;top:491px;width:334px;height:20px;background:#f9dfcf"></div>
<div class="c" style="right:92.5px;top:491px">400.00</div>
<div class="a" style="left:810px;top:491px;width:200px;height:20px;background:#f9dfcf"></div>
<div class="c" style="left:882.5px;top:491px">150.00</div>
<div class="a" style="left:1px;top:512px;width:34px;height:20px;background:#f3af82"></div>
<div class="c" style="left:10px;top:512px">24</div>
<div class="a" style="left:40px;top:512px;width:99px;height:20px;background:#f3af82"></div>
<div class="c" style="right:762.5px;top:512px">13.00</div>
<div class="a" style="left:140px;top:512px;width:334px;height:20px;background:#f3af82"></div>
<div class="c" style="right:427.5px;top:512px">8</div>
<div class="a" style="left:475px;top:512px;width:334px;height:20px;background:#f3af82"></div>
<div class="c" style="right:92.5px;top:512px">351.00</div>
<div class="a" style="left:810px;top:512px;width:200px;height:20px;background:#f3af82"></div>
<div class="c" style="left:882.5px;top:512px">158.00</div>
<div class="a" style="left:1px;top:533px;width:34px;height:20px;background:#f9dfcf"></div>
<div class="c" style="left:10px;top:533px">25</div>
<div class="a" style="left:40px;top:533px;width:99px;height:20px;background:#f9dfcf"></div>
<div class="c" style="right:762.5px;top:533px">13.00</div>
<div class="a" style="left:140px;top:533px;width:334px;height:20px;background:#f9dfcf"></div>
<div class="c" style="right:427.5px;top:533px">8</div>
<div class="a" style="left:475px;top:533px;width:334px;height:20px;background:#f9dfcf"></div>
<div class="c" style="right:92.5px;top:533px">440.00</div>
<div class="a" style="left:810px;top:533px;width:200px;height:20px;background:#f9dfcf"></div>
<div class="c" style="left:882.5px;top:533px">215.00</div>
<div class="a" style="left:1px;top:554px;width:34px;height:20px;background:#f3af82"></div>
<div class="c" style="left:10px;top:554px">26</div>
<div class="a" style="left:40px;top:554px;width:99px;height:20px;background:#f3af82"></div>
<div class="c" style="right:762.5px;top:554px">13.00</div>
<div class="a" style="left:140px;top:554px;width:334px;height:20px;background:#f3af82"></div>
<div class="c" style="right:427.5px;top:554px">8</div>
<div class="a" style="left:475px;top:554px;width:334px;height:20px;background:#f3af82"></div>
<div class="c" style="right:92.5px;top:554px">360.00</div>
<div class="a" style="left:810px;top:554px;width:200px;height:20px;background:#f3af82"></div>
<div class="c" style="left:882.5px;top:554px">170.00</div>
<div class="a" style="left:1px;top:575px;width:34px;height:20px;background:#f9dfcf"></div>
<div class="c" style="left:10px;top:575px">27</div>
<div class="a" style="left:40px;top:575px;width:99px;height:20px;background:#f9dfcf"></div>
<div class="c" style="right:762.5px;top:575px">13.00</div>
<div class="a" style="left:140px;top:575px;width:334px;height:20px;background:#f9dfcf"></div>
<div class="c" style="right:427.5px;top:575px">8</div>
<div class="a" style="left:475px;top:575px;width:334px;height:20px;background:#f9dfcf"></div>
<div class="c" style="right:92.5px;top:575px">360.00</div>
<div class="a" style="left:810px;top:575px;width:200px;height:20px;background:#f9dfcf"></div>
<div class="c" style="left:882.5px;top:575px">175.00</div>
<div class="a" style="left:1px;top:596px;width:34px;height:1px;background:#f3af82"></div>
<div class="a" style="left:40px;top:596px;width:99px;height:1px;background:#f3af82"></div>
<div class="a" style="left:140px;top:596px;width:334px;height:1px;background:#f3af82"></div>
<div class="a" style="left:475px;top:596px;width:334px;height:1px;background:#f3af82"></div>
<div class="a" style="left:810px;top:596px;width:200px;height:1px;background:#f3af82"></div>
<div class="a" style="left:40px;top:112px;width:100px;height:22px;border:solid #6f7377;border-width:2px 2px 2px 1px"></div>
</div>
<div class="a" style="left:1242px;top:109px;width:15px;height:597px;background:#f5f5f5"></div>
<div class="a" style="left:1242px;top:109px;width:15px;height:38px;background:#a9aaae"></div>
<svg class="a" style="left:1245px;top:681px" width="9" height="20" viewBox="0 0 9 20"><path d="M0.5 5.5H8.5L4.5 1Z" fill="#d0d0d0"/><path d="M0.5 15H8.5L4.5 19.5Z" fill="#333"/></svg>
<div class="a" style="left:348px;top:706px;width:894px;height:15px;background:#f5f5f5"></div>
<div class="a" style="left:348px;top:706px;width:418px;height:15px;background:#a9aaae"></div>
<svg class="a" style="left:1217px;top:709px" width="22" height="9" viewBox="0 0 22 9"><path d="M5.5 0.5V8.5L1 4.5Z" fill="#d0d0d0"/><path d="M15 0.5V8.5L19.5 4.5Z" fill="#222"/></svg>
<div class="a" style="left:348px;top:721px;width:909px;height:1px;background:#c8c8c8"></div>
<div class="a" style="left:352px;top:721px;width:45px;height:26px;background:#fff;border-left:1px solid #cfcfcf;border-right:1px solid #cfcfcf;border-bottom:2px solid #5b8fc7"></div>
<div class="a" style="left:466px;top:722px;width:1px;height:15px;background:#e6e6e6"></div>
<div class="a" style="left:528px;top:722px;width:1px;height:15px;background:#e6e6e6"></div>
<div class="t " style="left:360.5px;top:727.53px;font-size:13.2px;color:#333">Data</div>
<div class="t " style="left:404.5px;top:727.53px;font-size:13.2px;color:#777">Statistics</div>
<div class="t " style="left:474px;top:727.53px;font-size:13.2px;color:#777;letter-spacing:0.35px">Distinct</div>
</body></html>
